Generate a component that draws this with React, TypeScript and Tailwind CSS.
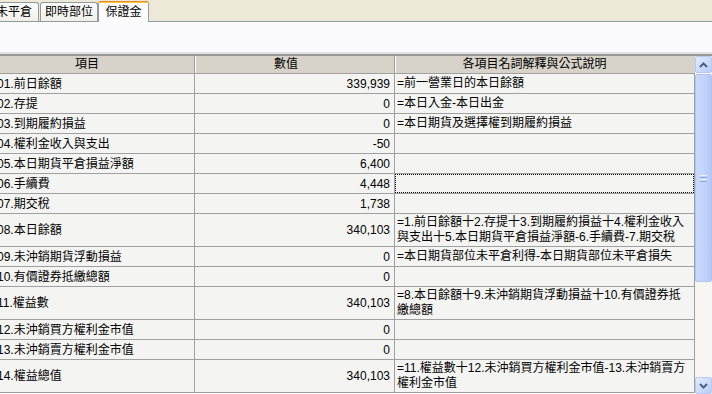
import React from 'react';

type Row = { item: string; value: string; desc?: string[]; tall?: boolean; focus?: boolean };

const ROWS: Row[] = [
  { item: '01.前日餘額', value: '339,939', desc: ['=前一營業日的本日餘額'] },
  { item: '02.存提', value: '0', desc: ['=本日入金-本日出金'] },
  { item: '03.到期履約損益', value: '0', desc: ['=本日期貨及選擇權到期履約損益'] },
  { item: '04.權利金收入與支出', value: '-50' },
  { item: '05.本日期貨平倉損益淨額', value: '6,400' },
  { item: '06.手續費', value: '4,448', focus: true },
  { item: '07.期交稅', value: '1,738' },
  {
    item: '08.本日餘額',
    value: '340,103',
    tall: true,
    desc: ['=1.前日餘額十2.存提十3.到期履約損益十4.權利金收入', '與支出十5.本日期貨平倉損益淨額-6.手續費-7.期交稅'],
  },
  { item: '09.未沖銷期貨浮動損益', value: '0', desc: ['=本日期貨部位未平倉利得-本日期貨部位未平倉損失'] },
  { item: '10.有價證券抵繳總額', value: '0' },
  {
    item: '11.權益數',
    value: '340,103',
    tall: true,
    desc: ['=8.本日餘額十9.未沖銷期貨浮動損益十10.有價證券抵', '繳總額'],
  },
  { item: '12.未沖銷買方權利金市值', value: '0' },
  { item: '13.未沖銷賣方權利金市值', value: '0' },
  {
    item: '14.權益總值',
    value: '340,103',
    tall: true,
    desc: ['=11.權益數十12.未沖銷買方權利金市值-13.未沖銷賣方', '權利金市值'],
  },
];

const FONT = "font-['Liberation_Sans','Noto_Sans_CJK_TC',sans-serif]";

// XP-style tabs across the top
const Tabs = () => (
  <div className="h-[22px] bg-[#ece9d8] border-b border-[#919b9c] flex items-end">
    <div className="h-[19px] w-[39px] shrink-0 overflow-hidden border border-b-0 border-[#919b9c] border-l-0 rounded-tr-[3px] bg-gradient-to-b from-[#fefefe] to-[#f0efe8] flex items-center justify-end pr-[6px] text-[12px] whitespace-nowrap">
      <span className="shrink-0">未平倉</span>
    </div>
    <div className="h-[19px] w-[58px] ml-[1px] border border-b-0 border-[#919b9c] rounded-t-[3px] bg-gradient-to-b from-[#fefefe] to-[#f0efe8] flex items-center justify-center text-[12px] whitespace-nowrap">
      即時部位
    </div>
    <div className="h-[21px] w-[51px] -mb-[1px] border border-b-0 border-[#919b9c] border-t-0 rounded-t-[3px] bg-[#fcfcfe] flex flex-col text-[12px] whitespace-nowrap">
      <div className="h-[1px] bg-[#e68b2c] rounded-t-[3px]" />
      <div className="h-[2px] bg-[#ffc73c]" />
      <div className="flex-1 flex items-center justify-center pb-[1px]">保證金</div>
    </div>
  </div>
);

const ScrollBar = () => (
  <div className="w-[17px] flex flex-col bg-[#f7f6f2]">
    <div className="h-[17px] rounded-[2px] border border-[#b7c9f4] bg-gradient-to-br from-[#e3ebfe] to-[#b8cdf8] flex items-center justify-center">
      <svg width="9" height="6" viewBox="0 0 9 6">
        <path d="M1 5 L4.5 1.5 L8 5" fill="none" stroke="#4d6185" strokeWidth="2" />
      </svg>
    </div>
    <div className="h-[208px] mt-[1px] rounded-[2px] border border-[#b0c4f5] bg-gradient-to-r from-[#c9d8fc] via-[#c3d4fb] to-[#b5c9f7] flex flex-col items-center justify-center gap-[1px]">
      <div className="w-[7px] h-[1px] bg-[#eef3fe]" />
      <div className="w-[7px] h-[1px] bg-[#8fa8e4]" />
      <div className="w-[7px] h-[1px] bg-[#eef3fe]" />
      <div className="w-[7px] h-[1px] bg-[#8fa8e4]" />
    </div>
    <div className="flex-1" />
    <div className="h-[17px] rounded-[2px] border border-[#b7c9f4] bg-gradient-to-br from-[#e3ebfe] to-[#b8cdf8] flex items-center justify-center">
      <svg width="9" height="6" viewBox="0 0 9 6">
        <path d="M1 1 L4.5 4.5 L8 1" fill="none" stroke="#4d6185" strokeWidth="2" />
      </svg>
    </div>
  </div>
);

export default function App() {
  return (
    <div className={`w-[712px] h-[394px] overflow-hidden bg-white text-black ${FONT}`}>
      <Tabs />
      <div className="h-[30px] bg-[#fbfbfd]" />
      <div className="h-[2px] bg-[#e3e3e3]" />
      <div className="h-[2px] bg-[#9a9a9a]" />
      <div className="flex h-[338px]">
        <div className="w-[695px] flex flex-col">
          {/* header */}
          <div className="flex h-[18px] shrink-0 bg-[#d7d3c8] border-b border-[#a0a0a0] text-[12px] leading-[17px]">
            <div className="w-[195px] border-r border-[#a09d94] text-center pr-[20px]">項目</div>
            <div className="w-[200px] border-l border-white border-r border-r-[#a09d94] text-center pr-[18px]">數值</div>
            <div className="w-[300px] border-l border-white text-center pr-[22px]">各項目名詞解釋與公式說明</div>
          </div>
          {ROWS.map((r) => (
            <div
              key={r.item}
              className={`flex ${r.tall ? 'h-[33px]' : 'h-[20px]'} bg-[#f4f4f2] border-b border-[#a0a0a0] text-[12px] shrink-0`}
            >
              <div className="w-[195px] border-r border-[#a0a0a0] flex items-center overflow-hidden">
                <span className="ml-[-3px] whitespace-nowrap">{r.item}</span>
              </div>
              <div className="w-[200px] border-r border-[#a0a0a0] flex items-center justify-end pr-[4px]">
                {r.value}
              </div>
              <div className="w-[300px] border-r border-[#a0a0a0] flex items-center">
                <div
                  className={`w-full h-full flex flex-col justify-center pl-[2px] leading-[15px] ${
                    r.focus ? 'border border-dotted border-black' : ''
                  }`}
                >
                  {r.desc?.map((d) => (
                    <div key={d} className="whitespace-nowrap">
                      {d}
                    </div>
                  ))}
                </div>
              </div>
            </div>
          ))}
        </div>
        <ScrollBar />
      </div>
    </div>
  );
}
